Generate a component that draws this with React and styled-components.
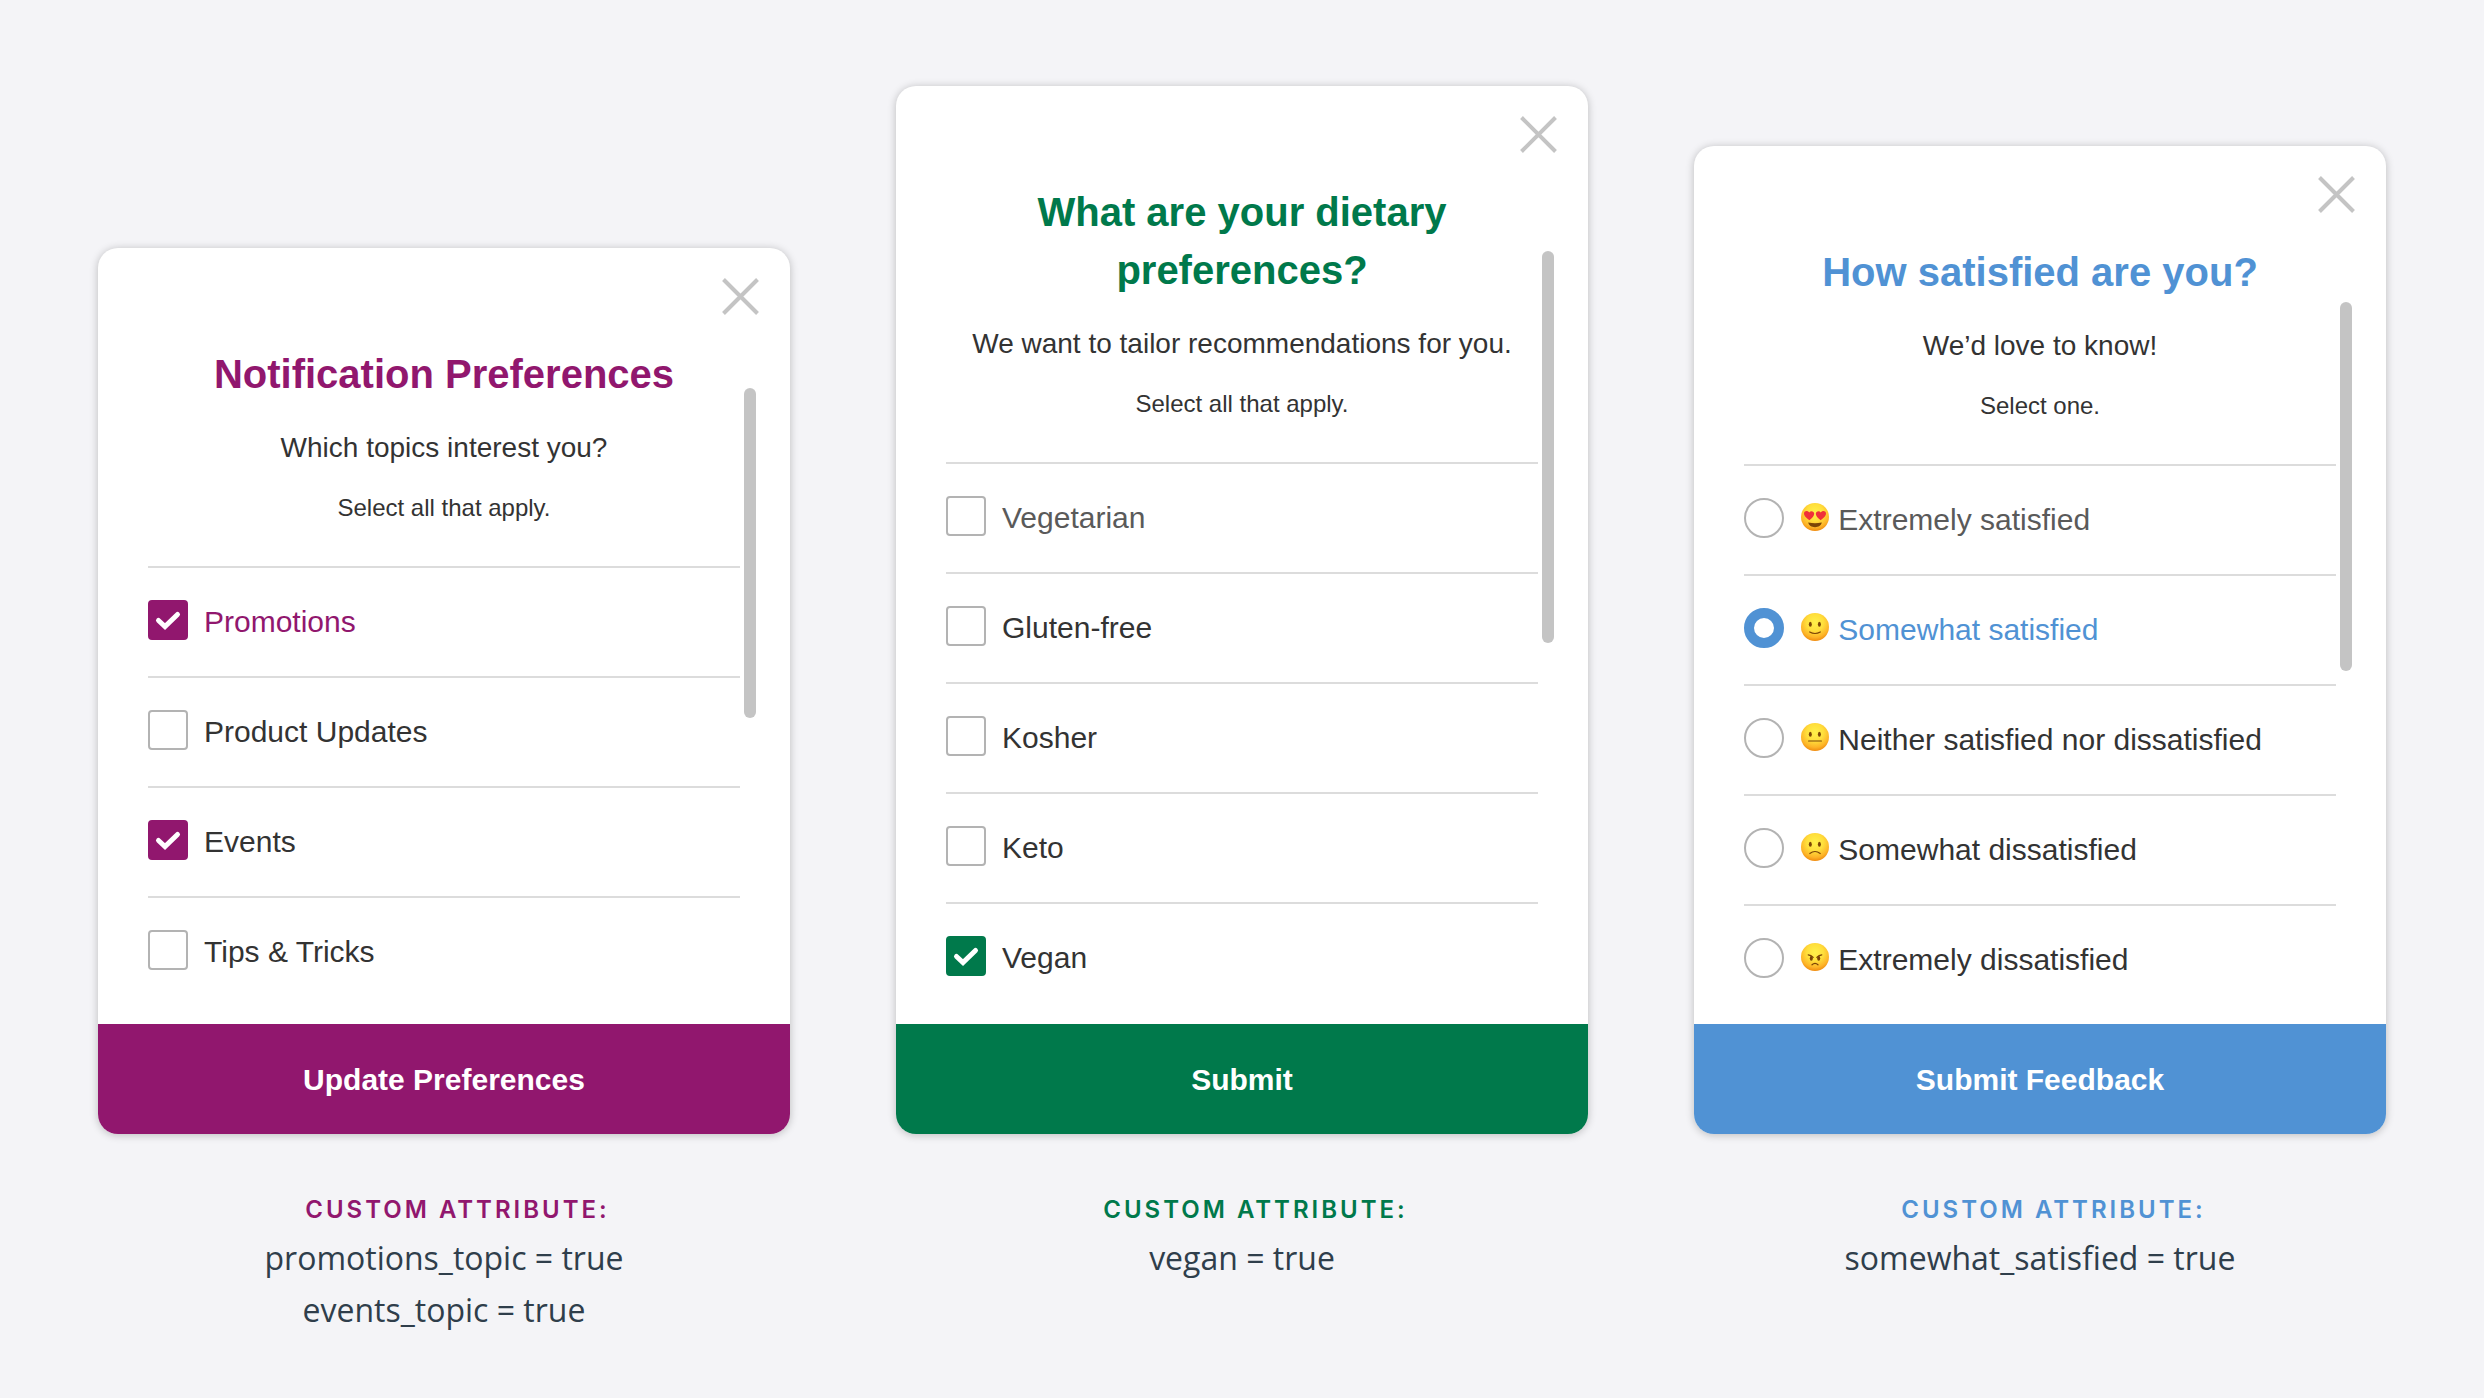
import React, { useId, useState } from "react";
import styled, { createGlobalStyle } from "styled-components";

const GlobalStyle = createGlobalStyle`
  * {
    box-sizing: border-box;
  }
  body {
    margin: 0;
    background: #f4f4f7;
    font-family: "Liberation Sans", Arial, sans-serif;
    color: #333333;
  }
`;

const surveys = [
  {
    id: "topics",
    type: "checkbox",
    color: "#91176e",
    title: "Notification Preferences",
    subtitle: "Which topics interest you?",
    hint: "Select all that apply.",
    options: [
      { label: "Promotions", tone: "accent" },
      { label: "Product Updates" },
      { label: "Events" },
      { label: "Tips & Tricks" }
    ],
    selected: ["Promotions", "Events"],
    button: "Update Preferences",
    attributes: ["promotions_topic = true", "events_topic = true"],
    scroll: { top: 140, height: 330 },
    tail: 18
  },
  {
    id: "diet",
    type: "checkbox",
    color: "#00794b",
    title: "What are your dietary preferences?",
    subtitle: "We want to tailor recommendations for you.",
    hint: "Select all that apply.",
    options: [
      { label: "Vegetarian", tone: "muted" },
      { label: "Gluten-free" },
      { label: "Kosher" },
      { label: "Keto" },
      { label: "Vegan" }
    ],
    selected: ["Vegan"],
    button: "Submit",
    attributes: ["vegan = true"],
    scroll: { top: 165, height: 392 },
    tail: 12
  },
  {
    id: "satisfaction",
    type: "radio",
    color: "#5092d4",
    title: "How satisfied are you?",
    subtitle: "We’d love to know!",
    hint: "Select one.",
    options: [
      { label: "Extremely satisfied", face: "love", tone: "muted" },
      { label: "Somewhat satisfied", face: "smile", tone: "accent" },
      { label: "Neither satisfied nor dissatisfied", face: "neutral" },
      { label: "Somewhat dissatisfied", face: "frown" },
      { label: "Extremely dissatisfied", face: "angry" }
    ],
    selected: ["Somewhat satisfied"],
    button: "Submit Feedback",
    attributes: ["somewhat_satisfied = true"],
    scroll: { top: 156, height: 369 },
    tail: 10
  }
];

const Page = styled.main`
  min-height: 100vh;
  padding: 86px 98px 50px;
  display: grid;
  grid-template-columns: repeat(3, minmax(0, 1fr));
  grid-template-rows: auto 1fr;
  column-gap: 106px;
  row-gap: 56px;
`;

const Card = styled.form`
  position: relative;
  grid-row: 1;
  align-self: end;
  display: flex;
  flex-direction: column;
  border-radius: 20px;
  background: #ffffff;
  box-shadow: 0 1px 8px rgba(0, 0, 0, 0.24);
`;

const CloseButton = styled.button`
  align-self: flex-end;
  margin: 30px 31px 0 0;
  padding: 0;
  width: 37px;
  height: 37px;
  border: 0;
  background: none;
  cursor: pointer;
  svg {
    display: block;
  }
`;

const Content = styled.div`
  padding: 30px 50px ${(props) => props.$tail}px;
`;

const Title = styled.h2`
  margin: 0;
  font-size: 40px;
  line-height: 58px;
  text-align: center;
  color: ${(props) => props.$color};
`;

const Subtitle = styled.p`
  margin: 25px 0 0;
  font-size: 28px;
  line-height: 40px;
  text-align: center;
`;

const Hint = styled.p`
  margin: 20px 0 0;
  font-size: 24px;
  line-height: 40px;
  text-align: center;
`;

const Options = styled.div`
  margin-top: 38px;
`;

const Option = styled.label`
  display: flex;
  align-items: flex-start;
  gap: 16px;
  padding: 32px 0;
  border-top: 2px solid #dcdcdc;
  cursor: pointer;
`;

const Checkbox = styled.input`
  appearance: none;
  flex: none;
  width: 40px;
  height: 40px;
  margin: 0;
  border: 2px solid #b3b3b3;
  border-radius: 4px;
  background: #ffffff;
  &:checked {
    border-color: ${(props) => props.$color};
    background: ${(props) => props.$color};
  }
`;

const Radio = styled(Checkbox)`
  border-radius: 50%;
  &:checked {
    border-width: 10px;
    background: #ffffff;
  }
`;

const Control = styled.span`
  position: relative;
  display: flex;
  flex: none;
`;

const Tick = styled.svg`
  position: absolute;
  inset: 0;
  pointer-events: none;
`;

const OptionText = styled.span`
  font-size: 30px;
  line-height: 44px;
  color: ${(props) => props.$color};
`;

const FaceSvg = styled.svg`
  vertical-align: -2px;
`;

const SubmitButton = styled.button`
  height: 110px;
  padding: 2px 0 0;
  border: 0;
  border-radius: 0 0 20px 20px;
  background: ${(props) => props.$color};
  color: #ffffff;
  font-family: inherit;
  font-size: 30px;
  font-weight: bold;
  cursor: pointer;
`;

// floats over the right edge of the card
const ScrollThumb = styled.div`
  position: absolute;
  top: ${(props) => props.$top}px;
  right: 34px;
  width: 12px;
  height: ${(props) => props.$height}px;
  border-radius: 6px;
  background: #c4c4c4;
`;

const Caption = styled.section`
  grid-row: 2;
  text-align: center;
`;

const CaptionTitle = styled.h3`
  margin: 0 0 2px;
  padding-left: 27px;
  font-family: Inter, sans-serif;
  font-size: 24px;
  line-height: 40px;
  font-weight: 600;
  letter-spacing: 3px;
  text-transform: uppercase;
  color: ${(props) => props.$color};
`;

const CaptionValue = styled.p`
  margin: 0;
  font-family: "Open Sans", sans-serif;
  font-size: 32px;
  line-height: 52px;
  color: #2f3e4b;
`;

const INK = "#7b4406";

function Face({ kind }) {
  const id = useId();
  const eyes = (
    <g fill={INK}>
      <ellipse cx="10.3" cy="12.2" rx="1.5" ry="2.5" />
      <ellipse cx="19.4" cy="12.2" rx="1.5" ry="2.5" />
    </g>
  );
  const stroke = { fill: "none", stroke: INK, strokeWidth: 1.2, strokeLinecap: "round" };
  return (
    <FaceSvg width="30" height="30" viewBox="0 0 30 30" aria-hidden="true">
      <defs>
        <radialGradient id={id} cx="0.5" cy="0.34" r="0.66">
          <stop offset="0" stopColor="#fff04a" />
          <stop offset="0.45" stopColor="#ffdf3c" />
          <stop offset="0.8" stopColor="#fdb428" />
          <stop offset="1" stopColor="#f08c10" />
        </radialGradient>
      </defs>
      <circle cx="15" cy="15" r="14" fill={`url(#${id})`} />
      {kind === "love" && (
        <>
          <path
            d="M9.4 18.2C5.5 15.6 3.7 13.4 4 11.1c.3-2.3 3.6-3.2 5.2-.6 1.7-2.2 5-1.1 5 1.3 0 2.2-1.9 4.2-4.8 6.4z"
            fill="#f0303a"
          />
          <path
            d="M20.6 18.2c3.9-2.6 5.7-4.8 5.4-7.1-.3-2.3-3.6-3.2-5.2-.6-1.7-2.2-5-1.1-5 1.3 0 2.2 1.9 4.2 4.8 6.4z"
            fill="#f0303a"
          />
          <path d="M8.2 20.6q6.8 1.4 13.6 0c-.6 3-3.400 4.600-6.800 4.600s-6.200-1.600-6.800-4.600z" fill={INK} />
        </>
      )}
      {kind === "smile" && (
        <>
          {eyes}
          <path d="M9.7 20q5.300 3 10.600 0" {...stroke} />
        </>
      )}
      {kind === "neutral" && (
        <>
          {eyes}
          <path d="M8.600 19h12.800" {...stroke} />
        </>
      )}
      {kind === "frown" && (
        <>
          {eyes}
          <path d="M9.800 21.500q5.200-4 10.400 0" {...stroke} />
        </>
      )}
      {kind === "angry" && (
        <>
          <g fill={INK}>
            <ellipse cx="11.300" cy="16.300" rx="1.500" ry="2.500" />
            <ellipse cx="18.700" cy="16.300" rx="1.500" ry="2.500" />
          </g>
          <path d="M8.200 12.800q2.800.3 5 2.600M21.800 12.800q-2.800.3-5 2.600M12 22.800q3-2.800 6 0" {...stroke} />
        </>
      )}
    </FaceSvg>
  );
}

function Survey({ survey }) {
  const [selected, setSelected] = useState(survey.selected);
  const Input = survey.type === "radio" ? Radio : Checkbox;
  const textColors = { accent: survey.color, muted: "#5a5a5a" };

  const toggle = (label) => {
    if (survey.type === "radio") {
      setSelected([label]);
    } else if (selected.includes(label)) {
      setSelected(selected.filter((ele) => ele !== label));
    } else {
      setSelected([...selected, label]);
    }
  };

  return (
    <Card onSubmit={(e) => e.preventDefault()}>
      <CloseButton type="button" aria-label="Close">
        <svg width="37" height="37" viewBox="0 0 37 37">
          <path d="M1.500 1.500l34 34M35.500 1.500l-34 34" stroke="#c4c4c4" strokeWidth="4" />
        </svg>
      </CloseButton>
      <Content $tail={survey.tail}>
        <Title $color={survey.color}>{survey.title}</Title>
        <Subtitle>{survey.subtitle}</Subtitle>
        <Hint>{survey.hint}</Hint>
        <Options>
          {survey.options.map((option) => {
            const checked = selected.includes(option.label);
            return (
              <Option key={option.label}>
                <Control>
                  <Input
                    type={survey.type}
                    name={survey.id}
                    $color={survey.color}
                    checked={checked}
                    onChange={() => toggle(option.label)}
                  />
                  {checked && survey.type === "checkbox" && (
                    <Tick width="40" height="40" viewBox="0 0 40 40">
                      <path
                        d="M10.500 20.500l6.500 6 12.500-12"
                        fill="none"
                        stroke="#ffffff"
                        strokeWidth="5"
                        strokeLinecap="round"
                      />
                    </Tick>
                  )}
                </Control>
                <OptionText $color={textColors[option.tone] || "#333333"}>
                  {option.face && <Face kind={option.face} />}
                  {option.face && " "}
                  {option.label}
                </OptionText>
              </Option>
            );
          })}
        </Options>
      </Content>
      <SubmitButton type="submit" $color={survey.color}>
        {survey.button}
      </SubmitButton>
      <ScrollThumb $top={survey.scroll.top} $height={survey.scroll.height} />
    </Card>
  );
}

export default function App() {
  return (
    <>
      <GlobalStyle />
      <Page>
        {surveys.map((survey) => (
          <Survey key={survey.id} survey={survey} />
        ))}
        {surveys.map((survey) => (
          <Caption key={survey.id}>
            <CaptionTitle $color={survey.color}>Custom attribute:</CaptionTitle>
            {survey.attributes.map((attribute) => (
              <CaptionValue key={attribute}>{attribute}</CaptionValue>
            ))}
          </Caption>
        ))}
      </Page>
    </>
  );
}
